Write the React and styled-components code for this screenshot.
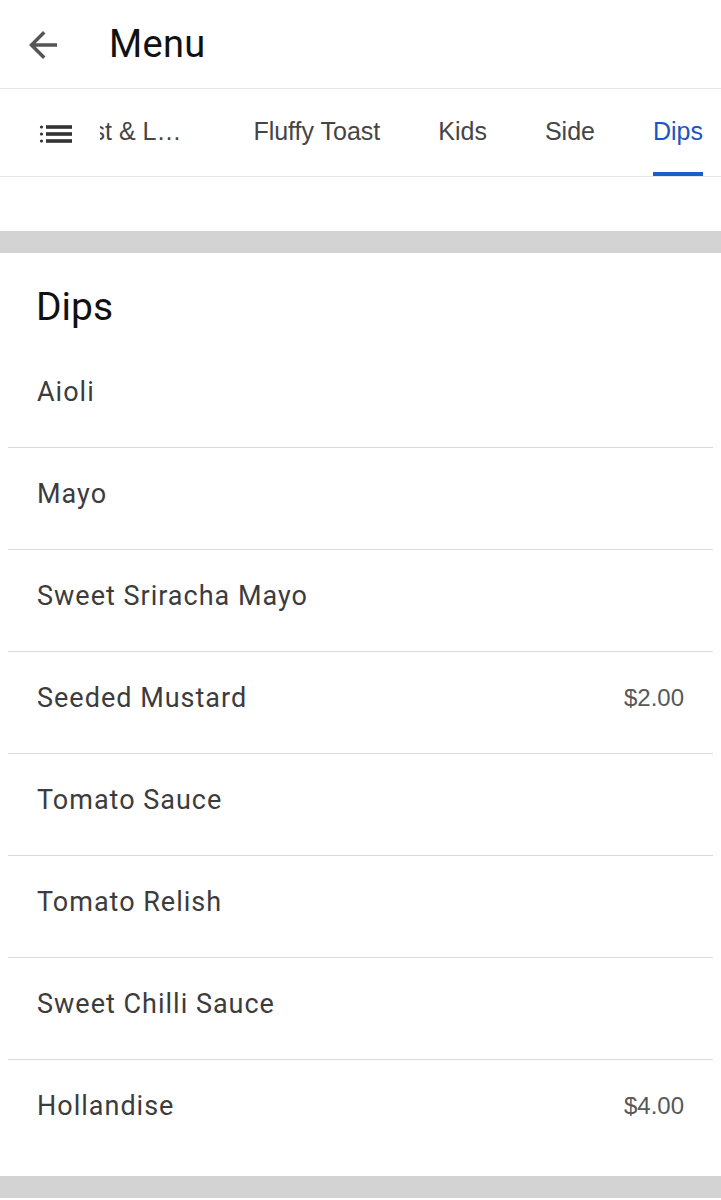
import React from "react";
import styled, { createGlobalStyle } from "styled-components";

const GlobalStyle = createGlobalStyle`
  html, body {
    margin: 0;
    padding: 0;
    background: #ffffff;
  }
  body {
    font-family: Roboto, "Liberation Sans", sans-serif;
    -webkit-font-smoothing: antialiased;
  }
`;

const tabs = ["Breakfast & Lunch", "Fluffy Toast", "Kids", "Side", "Dips"];

const dips = [
  { name: "Aioli" },
  { name: "Mayo" },
  { name: "Sweet Sriracha Mayo" },
  { name: "Seeded Mustard", price: "$2.00" },
  { name: "Tomato Sauce" },
  { name: "Tomato Relish" },
  { name: "Sweet Chilli Sauce" },
  { name: "Hollandise", price: "$4.00" },
];

function BackIcon() {
  return (
    <svg width="42" height="42" viewBox="0 0 24 24" fill="#555555">
      <path d="M20 11H7.83l5.59-5.59L12 4l-8 8 8 8 1.41-1.41L7.83 13H20v-2z" />
    </svg>
  );
}

function ListIcon() {
  return (
    <svg width="36" height="22" viewBox="0 0 36 22" fill="#333333">
      <circle cx="3.5" cy="4" r="1.6" />
      <circle cx="3.5" cy="11" r="1.6" />
      <circle cx="3.5" cy="18" r="1.6" />
      <rect x="8" y="2.2" width="26" height="3.6" />
      <rect x="8" y="9.2" width="26" height="3.6" />
      <rect x="8" y="16.2" width="26" height="3.6" />
    </svg>
  );
}

function App() {
  return (
    <Page>
      <GlobalStyle />
      <Header>
        <BackButton>
          <BackIcon />
        </BackButton>
        <Title>Menu</Title>
      </Header>

      <TabBar>
        <ListButton>
          <ListIcon />
        </ListButton>
        <TabScroller>
          {tabs.map((t, i) => (
            <Tab key={t} $active={i === tabs.length - 1}>
              <TabLabel $first={i === 0}>{t}</TabLabel>
            </Tab>
          ))}
        </TabScroller>
      </TabBar>

      <Spacer />
      <Band />

      <Section>
        <SectionTitle>Dips</SectionTitle>
        <ItemList>
          {dips.map((d) => (
            <Item key={d.name}>
              <ItemName>{d.name}</ItemName>
              {d.price && <Price>{d.price}</Price>}
            </Item>
          ))}
        </ItemList>
      </Section>

      <Band />
      <Spacer />
    </Page>
  );
}

const Page = styled.div`
  width: 721px;
  min-height: 1200px;
  background: #ffffff;
  display: flex;
  flex-direction: column;
`;

const Header = styled.header`
  height: 88px;
  display: flex;
  align-items: center;
  border-bottom: 1px solid #e6e6e6;
`;

const BackButton = styled.div`
  width: 42px;
  height: 42px;
  margin-left: 22px;
  margin-top: 2px;
  display: flex;
`;

const Title = styled.h1`
  margin: 0 0 0 45px;
  font-family: Roboto, sans-serif;
  font-size: 38px;
  font-weight: 400;
  color: #111111;
  letter-spacing: 0.3px;
`;

const TabBar = styled.nav`
  height: 87px;
  display: flex;
  border-bottom: 1px solid #e6e6e6;
`;

const ListButton = styled.div`
  width: 100px;
  flex-shrink: 0;
  display: flex;
  align-items: center;
  padding-left: 38px;
  padding-top: 2px;
  box-sizing: border-box;
  background: #ffffff;
`;

const TabScroller = styled.div`
  flex: 1;
  display: flex;
  justify-content: flex-end;
  overflow: hidden;
`;

const Tab = styled.div`
  flex-shrink: 0;
  display: flex;
  align-items: stretch;
  padding: 0 29px;

  &:first-child {
    padding-right: 34px;
  }

  &:last-child {
    padding-right: 18px;
  }

  color: ${(p) => (p.$active ? "#1a56bd" : "#454545")};
`;

const TabLabel = styled.span`
  display: flex;
  align-items: center;
  padding-bottom: 2px;
  font-family: "Liberation Sans", Arial, sans-serif;
  font-size: 25px;
  white-space: nowrap;
  ${(p) =>
    p.$first &&
    `
    display: block;
    line-height: 84px;
    max-width: 184px;
    overflow: hidden;
    text-overflow: ellipsis;
  `}

  ${Tab}:last-child & {
    box-shadow: inset 0 -4px 0 #1a5fc8;
  }
`;

const Spacer = styled.div`
  height: 54px;
`;

const Band = styled.div`
  height: 22px;
  background: #d3d3d3;
`;

const Section = styled.section`
  padding-top: 33px;
  padding-bottom: 14px;
`;

const SectionTitle = styled.h2`
  margin: 0 0 18px 36px;
  font-family: Roboto, sans-serif;
  font-size: 39px;
  font-weight: 400;
  color: #111111;
  line-height: 42px;
`;

const ItemList = styled.ul`
  list-style: none;
  margin: 0 8px;
  padding: 0;
`;

const Item = styled.li`
  height: 102px;
  box-sizing: border-box;
  display: flex;
  align-items: center;
  justify-content: space-between;
  padding: 0 29px 10px;
  border-bottom: 1px solid #d9d9d9;

  &:last-child {
    border-bottom: none;
  }
`;

const ItemName = styled.span`
  font-family: Roboto, sans-serif;
  font-size: 27px;
  letter-spacing: 1px;
  color: #3c3c3c;
`;

const Price = styled.span`
  font-family: "Liberation Sans", Arial, sans-serif;
  font-size: 24px;
  color: #585858;
`;

export default App;
